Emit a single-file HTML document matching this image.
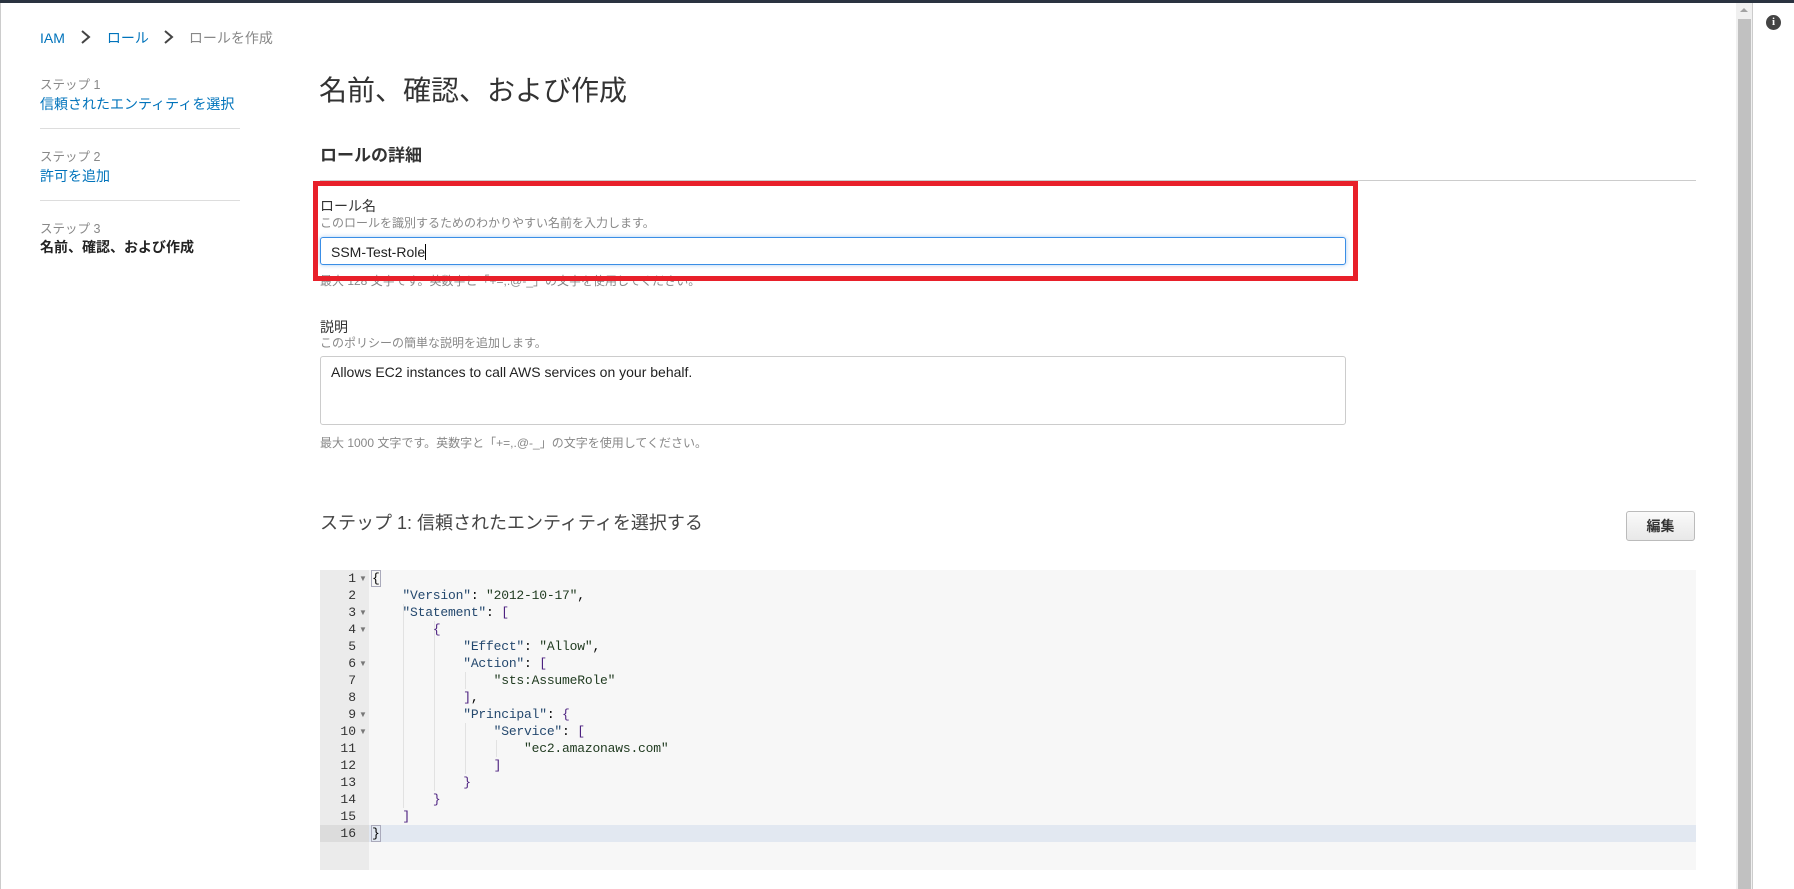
<!DOCTYPE html>
<html><head><meta charset="utf-8"><style>
*{margin:0;padding:0;box-sizing:border-box}
body{width:1794px;height:889px;overflow:hidden;background:#fff;position:relative;font-family:"Liberation Sans","Noto Sans CJK JP",sans-serif;color:#333}
.a{position:absolute;white-space:nowrap}
.lnk{color:#0073bb}
.sm{font-size:13px;color:#888}
.hint{font-size:12px;color:#888}
.code{position:absolute;left:320px;top:570px;width:1376px;height:300px;background:#f7f7f7}
.gut{position:absolute;left:0;top:0;width:49px;height:300px;background:#ebebeb}
.ln{position:absolute;left:0;width:36px;text-align:right;font:13px "Liberation Mono",monospace;color:#333;height:17px;line-height:17px}
.fd{position:absolute;left:39px;font-size:8px;color:#777;line-height:17px}
.cl{position:absolute;left:52px;font:13px/17px "Liberation Mono",monospace;white-space:pre;color:#000;letter-spacing:-0.2px}
.k{color:#24486e}.s{color:#1f3a1f}.b{color:#4b1f7f}
.g{position:absolute;width:1px;background:#e2e2e2}
.chev{display:inline-block;vertical-align:-2px}
</style></head><body>
<div class="a" style="left:0;top:0;width:1794px;height:3px;background:#2a3340"></div>
<div class="a" style="left:0;top:3px;width:1px;height:886px;background:#ccc"></div>

<div class="a" style="left:40px;top:28px;font-size:14px"><span class="lnk">IAM</span><svg class="chev" width="42" height="16" viewBox="0 0 42 16"><path d="M17 2 L24 8 L17 14" fill="none" stroke="#444" stroke-width="2"/></svg><span class="lnk">ロール</span><svg class="chev" width="40" height="16" viewBox="0 0 40 16"><path d="M16 2 L23 8 L16 14" fill="none" stroke="#444" stroke-width="2"/></svg><span style="color:#888">ロールを作成</span></div>

<div class="a sm" style="left:40px;top:74px;font-size:12.5px">ステップ 1</div>
<div class="a lnk" style="left:40px;top:94px;font-size:14px">信頼されたエンティティを選択</div>
<div class="a" style="left:40px;top:128px;width:200px;height:1px;background:#ddd"></div>
<div class="a sm" style="left:40px;top:146px;font-size:12.5px">ステップ 2</div>
<div class="a lnk" style="left:40px;top:166px;font-size:14px">許可を追加</div>
<div class="a" style="left:40px;top:200px;width:200px;height:1px;background:#ddd"></div>
<div class="a sm" style="left:40px;top:218px;font-size:12.5px">ステップ 3</div>
<div class="a" style="left:40px;top:237px;font-size:14px;font-weight:bold;color:#222">名前、確認、および作成</div>

<div class="a" style="left:319px;top:69px;font-size:28px;color:#333">名前、確認、および作成</div>
<div class="a" style="left:320px;top:141px;font-size:17px;font-weight:bold;color:#333">ロールの詳細</div>
<div class="a" style="left:320px;top:180px;width:1376px;height:1px;background:#ccc"></div>

<div class="a" style="left:320px;top:196px;font-size:14px">ロール名</div>
<div class="a hint" style="left:320px;top:214px">このロールを識別するためのわかりやすい名前を入力します。</div>
<div class="a" style="left:320px;top:237px;width:1026px;height:28px;border:1px solid #3a8ee6;border-radius:3px;box-shadow:0 0 4px rgba(60,140,230,.45);font-size:14px;padding:6px 10px;color:#222">SSM-Test-Role<span style="display:inline-block;width:1px;height:16px;background:#000;vertical-align:-3px"></span></div>
<div class="a hint" style="left:320px;top:272px">最大 128 文字です。英数字と「+=,.@-_」の文字を使用してください。</div>
<div class="a" style="left:313px;top:181px;width:1045px;height:100px;border:5px solid #e8202a"></div>

<div class="a" style="left:320px;top:317px;font-size:14px">説明</div>
<div class="a hint" style="left:320px;top:334px">このポリシーの簡単な説明を追加します。</div>
<div class="a" style="left:320px;top:356px;width:1026px;height:69px;border:1px solid #ccc;border-radius:3px;font-size:14px;padding:7px 10px;color:#222">Allows EC2 instances to call AWS services on your behalf.</div>
<div class="a hint" style="left:320px;top:434px">最大 1000 文字です。英数字と「+=,.@-_」の文字を使用してください。</div>

<div class="a" style="left:320px;top:509px;font-size:18px;color:#444">ステップ 1: 信頼されたエンティティを選択する</div>
<div class="a" style="left:1626px;top:511px;width:69px;height:30px;border:1px solid #bbb;border-radius:3px;background:linear-gradient(#fafafa,#e8e8e8);font-size:14px;font-weight:bold;text-align:center;line-height:28px;color:#333">編集</div>

<div class="code">
<div class="gut"></div>
<div class="a" style="left:0;top:255px;width:49px;height:17px;background:#dcdcdc"></div>
<div class="a" style="left:49px;top:255px;width:1327px;height:17px;background:#e2e8f1"></div>
<div class="g" style="left:83px;top:34px;height:204px"></div>
<div class="g" style="left:114px;top:51px;height:170px"></div>
<div class="g" style="left:145px;top:102px;height:17px"></div>
<div class="g" style="left:145px;top:153px;height:51px"></div>
<div class="g" style="left:176px;top:170px;height:17px"></div>
<div class="ln" style="top:0">1</div><div class="fd" style="top:0">▼</div>
<div class="ln" style="top:17px">2</div>
<div class="ln" style="top:34px">3</div><div class="fd" style="top:34px">▼</div>
<div class="ln" style="top:51px">4</div><div class="fd" style="top:51px">▼</div>
<div class="ln" style="top:68px">5</div>
<div class="ln" style="top:85px">6</div><div class="fd" style="top:85px">▼</div>
<div class="ln" style="top:102px">7</div>
<div class="ln" style="top:119px">8</div>
<div class="ln" style="top:136px">9</div><div class="fd" style="top:136px">▼</div>
<div class="ln" style="top:153px">10</div><div class="fd" style="top:153px">▼</div>
<div class="ln" style="top:170px">11</div>
<div class="ln" style="top:187px">12</div>
<div class="ln" style="top:204px">13</div>
<div class="ln" style="top:221px">14</div>
<div class="ln" style="top:238px">15</div>
<div class="ln" style="top:255px">16</div>
<div class="cl" style="top:0"><span style="outline:1px solid #aab">{</span></div>
<div class="cl" style="top:17px">    <span class="k">"Version"</span>: <span class="s">"2012-10-17"</span>,</div>
<div class="cl" style="top:34px">    <span class="k">"Statement"</span>: <span class="b">[</span></div>
<div class="cl" style="top:51px">        <span class="b">{</span></div>
<div class="cl" style="top:68px">            <span class="k">"Effect"</span>: <span class="s">"Allow"</span>,</div>
<div class="cl" style="top:85px">            <span class="k">"Action"</span>: <span class="b">[</span></div>
<div class="cl" style="top:102px">                <span class="s">"sts:AssumeRole"</span></div>
<div class="cl" style="top:119px">            <span class="b">]</span>,</div>
<div class="cl" style="top:136px">            <span class="k">"Principal"</span>: <span class="b">{</span></div>
<div class="cl" style="top:153px">                <span class="k">"Service"</span>: <span class="b">[</span></div>
<div class="cl" style="top:170px">                    <span class="s">"ec2.amazonaws.com"</span></div>
<div class="cl" style="top:187px">                <span class="b">]</span></div>
<div class="cl" style="top:204px">            <span class="b">}</span></div>
<div class="cl" style="top:221px">        <span class="b">}</span></div>
<div class="cl" style="top:238px">    <span class="b">]</span></div>
<div class="cl" style="top:255px"><span style="outline:1px solid #aab">}</span></div>
</div>

<div class="a" style="left:1736px;top:3px;width:16px;height:886px;background:#f0f0f0"></div>
<div class="a" style="left:1738px;top:19px;width:13px;height:870px;background:#c1c1c1"></div>
<div class="a" style="left:1740px;top:8px;width:0;height:0;border-left:4px solid transparent;border-right:4px solid transparent;border-bottom:4px solid #a3a3a3"></div>
<div class="a" style="left:1752px;top:3px;width:1px;height:886px;background:#ccc"></div>
<div class="a" style="left:1766px;top:15px;width:15px;height:15px;border-radius:50%;background:#444;color:#fff;font:bold 11px/15px 'Liberation Serif',serif;text-align:center">i</div>
</body></html>
